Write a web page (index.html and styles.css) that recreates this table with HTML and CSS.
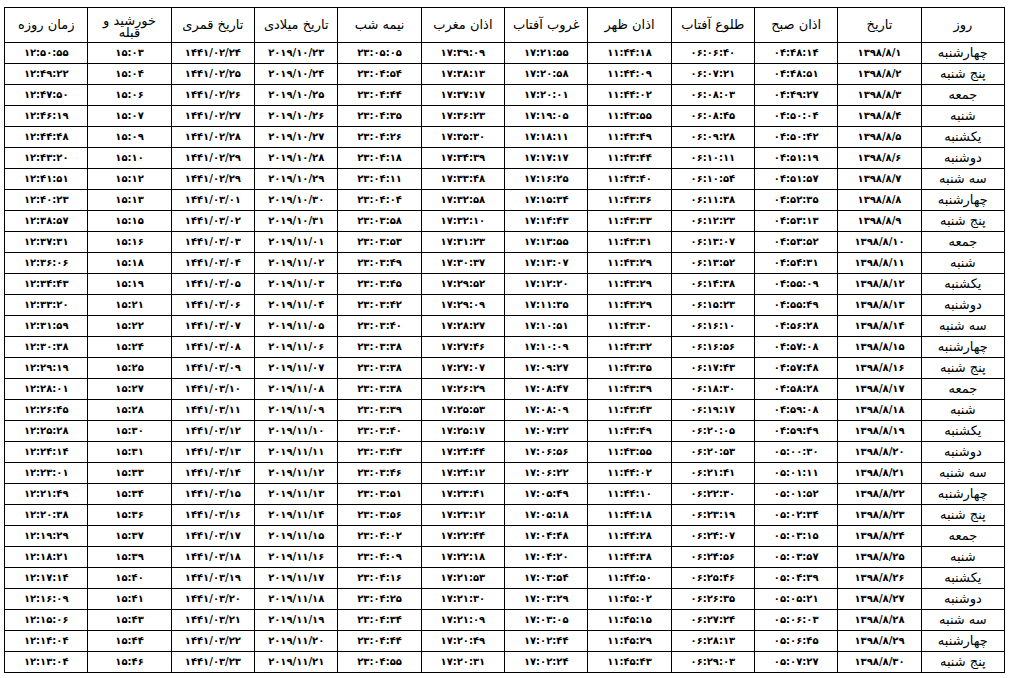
FILE: index.html
```html
<!DOCTYPE html>
<html dir="rtl" lang="fa">
<head>
<meta charset="utf-8">
<title>اوقات شرعی</title>
<link rel="stylesheet" href="styles.css">
</head>
<body>
<table class="times">
<thead>
<tr><th>روز</th><th>تاریخ</th><th>اذان صبح</th><th>طلوع آفتاب</th><th>اذان ظهر</th><th>غروب آفتاب</th><th>اذان مغرب</th><th>نیمه شب</th><th>تاریخ میلادی</th><th>تاریخ قمری</th><th class="two">خورشید و قبله</th><th>زمان روزه</th></tr>
</thead>
<tbody>
<tr><td class="day">چهارشنبه</td><td>۱۳۹۸/۸/۱</td><td>۰۴:۴۸:۱۴</td><td>۰۶:۰۶:۴۰</td><td>۱۱:۴۴:۱۸</td><td>۱۷:۲۱:۵۵</td><td>۱۷:۳۹:۰۹</td><td>۲۳:۰۵:۰۵</td><td>۲۰۱۹/۱۰/۲۳</td><td>۱۴۴۱/۰۲/۲۴</td><td>۱۵:۰۳</td><td>۱۲:۵۰:۵۵</td></tr>
<tr><td class="day">پنج شنبه</td><td>۱۳۹۸/۸/۲</td><td>۰۴:۴۸:۵۱</td><td>۰۶:۰۷:۲۱</td><td>۱۱:۴۴:۰۹</td><td>۱۷:۲۰:۵۸</td><td>۱۷:۳۸:۱۳</td><td>۲۳:۰۴:۵۴</td><td>۲۰۱۹/۱۰/۲۴</td><td>۱۴۴۱/۰۲/۲۵</td><td>۱۵:۰۴</td><td>۱۲:۴۹:۲۲</td></tr>
<tr><td class="day">جمعه</td><td>۱۳۹۸/۸/۳</td><td>۰۴:۴۹:۲۷</td><td>۰۶:۰۸:۰۳</td><td>۱۱:۴۴:۰۲</td><td>۱۷:۲۰:۰۱</td><td>۱۷:۳۷:۱۷</td><td>۲۳:۰۴:۴۴</td><td>۲۰۱۹/۱۰/۲۵</td><td>۱۴۴۱/۰۲/۲۶</td><td>۱۵:۰۶</td><td>۱۲:۴۷:۵۰</td></tr>
<tr><td class="day">شنبه</td><td>۱۳۹۸/۸/۴</td><td>۰۴:۵۰:۰۴</td><td>۰۶:۰۸:۴۵</td><td>۱۱:۴۳:۵۵</td><td>۱۷:۱۹:۰۵</td><td>۱۷:۳۶:۲۳</td><td>۲۳:۰۴:۳۵</td><td>۲۰۱۹/۱۰/۲۶</td><td>۱۴۴۱/۰۲/۲۷</td><td>۱۵:۰۷</td><td>۱۲:۴۶:۱۹</td></tr>
<tr><td class="day">یکشنبه</td><td>۱۳۹۸/۸/۵</td><td>۰۴:۵۰:۴۲</td><td>۰۶:۰۹:۲۸</td><td>۱۱:۴۳:۴۹</td><td>۱۷:۱۸:۱۱</td><td>۱۷:۳۵:۳۰</td><td>۲۳:۰۴:۲۶</td><td>۲۰۱۹/۱۰/۲۷</td><td>۱۴۴۱/۰۲/۲۸</td><td>۱۵:۰۹</td><td>۱۲:۴۴:۴۸</td></tr>
<tr><td class="day">دوشنبه</td><td>۱۳۹۸/۸/۶</td><td>۰۴:۵۱:۱۹</td><td>۰۶:۱۰:۱۱</td><td>۱۱:۴۳:۴۴</td><td>۱۷:۱۷:۱۷</td><td>۱۷:۳۴:۳۹</td><td>۲۳:۰۴:۱۸</td><td>۲۰۱۹/۱۰/۲۸</td><td>۱۴۴۱/۰۲/۲۹</td><td>۱۵:۱۰</td><td>۱۲:۴۳:۲۰</td></tr>
<tr><td class="day">سه شنبه</td><td>۱۳۹۸/۸/۷</td><td>۰۴:۵۱:۵۷</td><td>۰۶:۱۰:۵۴</td><td>۱۱:۴۳:۴۰</td><td>۱۷:۱۶:۲۵</td><td>۱۷:۳۳:۴۸</td><td>۲۳:۰۴:۱۱</td><td>۲۰۱۹/۱۰/۲۹</td><td>۱۴۴۱/۰۲/۲۹</td><td>۱۵:۱۲</td><td>۱۲:۴۱:۵۱</td></tr>
<tr><td class="day">چهارشنبه</td><td>۱۳۹۸/۸/۸</td><td>۰۴:۵۲:۳۵</td><td>۰۶:۱۱:۳۸</td><td>۱۱:۴۳:۳۶</td><td>۱۷:۱۵:۳۴</td><td>۱۷:۳۲:۵۸</td><td>۲۳:۰۴:۰۴</td><td>۲۰۱۹/۱۰/۳۰</td><td>۱۴۴۱/۰۳/۰۱</td><td>۱۵:۱۳</td><td>۱۲:۴۰:۲۳</td></tr>
<tr><td class="day">پنج شنبه</td><td>۱۳۹۸/۸/۹</td><td>۰۴:۵۳:۱۳</td><td>۰۶:۱۲:۲۳</td><td>۱۱:۴۳:۳۳</td><td>۱۷:۱۴:۴۳</td><td>۱۷:۳۲:۱۰</td><td>۲۳:۰۳:۵۸</td><td>۲۰۱۹/۱۰/۳۱</td><td>۱۴۴۱/۰۳/۰۲</td><td>۱۵:۱۵</td><td>۱۲:۳۸:۵۷</td></tr>
<tr><td class="day">جمعه</td><td>۱۳۹۸/۸/۱۰</td><td>۰۴:۵۳:۵۲</td><td>۰۶:۱۳:۰۷</td><td>۱۱:۴۳:۳۱</td><td>۱۷:۱۳:۵۵</td><td>۱۷:۳۱:۲۳</td><td>۲۳:۰۳:۵۳</td><td>۲۰۱۹/۱۱/۰۱</td><td>۱۴۴۱/۰۳/۰۳</td><td>۱۵:۱۶</td><td>۱۲:۳۷:۳۱</td></tr>
<tr><td class="day">شنبه</td><td>۱۳۹۸/۸/۱۱</td><td>۰۴:۵۴:۳۱</td><td>۰۶:۱۳:۵۲</td><td>۱۱:۴۳:۲۹</td><td>۱۷:۱۳:۰۷</td><td>۱۷:۳۰:۳۷</td><td>۲۳:۰۳:۴۹</td><td>۲۰۱۹/۱۱/۰۲</td><td>۱۴۴۱/۰۳/۰۴</td><td>۱۵:۱۸</td><td>۱۲:۳۶:۰۶</td></tr>
<tr><td class="day">یکشنبه</td><td>۱۳۹۸/۸/۱۲</td><td>۰۴:۵۵:۰۹</td><td>۰۶:۱۴:۳۸</td><td>۱۱:۴۳:۲۹</td><td>۱۷:۱۲:۲۰</td><td>۱۷:۲۹:۵۲</td><td>۲۳:۰۳:۴۵</td><td>۲۰۱۹/۱۱/۰۳</td><td>۱۴۴۱/۰۳/۰۵</td><td>۱۵:۱۹</td><td>۱۲:۳۴:۴۳</td></tr>
<tr><td class="day">دوشنبه</td><td>۱۳۹۸/۸/۱۳</td><td>۰۴:۵۵:۴۹</td><td>۰۶:۱۵:۲۳</td><td>۱۱:۴۳:۲۹</td><td>۱۷:۱۱:۳۵</td><td>۱۷:۲۹:۰۹</td><td>۲۳:۰۳:۴۲</td><td>۲۰۱۹/۱۱/۰۴</td><td>۱۴۴۱/۰۳/۰۶</td><td>۱۵:۲۱</td><td>۱۲:۳۳:۲۰</td></tr>
<tr><td class="day">سه شنبه</td><td>۱۳۹۸/۸/۱۴</td><td>۰۴:۵۶:۲۸</td><td>۰۶:۱۶:۱۰</td><td>۱۱:۴۳:۳۰</td><td>۱۷:۱۰:۵۱</td><td>۱۷:۲۸:۲۷</td><td>۲۳:۰۳:۴۰</td><td>۲۰۱۹/۱۱/۰۵</td><td>۱۴۴۱/۰۳/۰۷</td><td>۱۵:۲۲</td><td>۱۲:۳۱:۵۹</td></tr>
<tr><td class="day">چهارشنبه</td><td>۱۳۹۸/۸/۱۵</td><td>۰۴:۵۷:۰۸</td><td>۰۶:۱۶:۵۶</td><td>۱۱:۴۳:۳۲</td><td>۱۷:۱۰:۰۹</td><td>۱۷:۲۷:۴۶</td><td>۲۳:۰۳:۳۸</td><td>۲۰۱۹/۱۱/۰۶</td><td>۱۴۴۱/۰۳/۰۸</td><td>۱۵:۲۴</td><td>۱۲:۳۰:۳۸</td></tr>
<tr><td class="day">پنج شنبه</td><td>۱۳۹۸/۸/۱۶</td><td>۰۴:۵۷:۴۸</td><td>۰۶:۱۷:۴۳</td><td>۱۱:۴۳:۳۵</td><td>۱۷:۰۹:۲۷</td><td>۱۷:۲۷:۰۷</td><td>۲۳:۰۳:۳۸</td><td>۲۰۱۹/۱۱/۰۷</td><td>۱۴۴۱/۰۳/۰۹</td><td>۱۵:۲۵</td><td>۱۲:۲۹:۱۹</td></tr>
<tr><td class="day">جمعه</td><td>۱۳۹۸/۸/۱۷</td><td>۰۴:۵۸:۲۸</td><td>۰۶:۱۸:۳۰</td><td>۱۱:۴۳:۳۹</td><td>۱۷:۰۸:۴۷</td><td>۱۷:۲۶:۲۹</td><td>۲۳:۰۳:۳۸</td><td>۲۰۱۹/۱۱/۰۸</td><td>۱۴۴۱/۰۳/۱۰</td><td>۱۵:۲۷</td><td>۱۲:۲۸:۰۱</td></tr>
<tr><td class="day">شنبه</td><td>۱۳۹۸/۸/۱۸</td><td>۰۴:۵۹:۰۸</td><td>۰۶:۱۹:۱۷</td><td>۱۱:۴۳:۴۳</td><td>۱۷:۰۸:۰۹</td><td>۱۷:۲۵:۵۳</td><td>۲۳:۰۳:۳۹</td><td>۲۰۱۹/۱۱/۰۹</td><td>۱۴۴۱/۰۳/۱۱</td><td>۱۵:۲۸</td><td>۱۲:۲۶:۴۵</td></tr>
<tr><td class="day">یکشنبه</td><td>۱۳۹۸/۸/۱۹</td><td>۰۴:۵۹:۴۹</td><td>۰۶:۲۰:۰۵</td><td>۱۱:۴۳:۴۹</td><td>۱۷:۰۷:۳۲</td><td>۱۷:۲۵:۱۷</td><td>۲۳:۰۳:۴۰</td><td>۲۰۱۹/۱۱/۱۰</td><td>۱۴۴۱/۰۳/۱۲</td><td>۱۵:۳۰</td><td>۱۲:۲۵:۲۸</td></tr>
<tr><td class="day">دوشنبه</td><td>۱۳۹۸/۸/۲۰</td><td>۰۵:۰۰:۳۰</td><td>۰۶:۲۰:۵۳</td><td>۱۱:۴۳:۵۵</td><td>۱۷:۰۶:۵۶</td><td>۱۷:۲۴:۴۴</td><td>۲۳:۰۳:۴۳</td><td>۲۰۱۹/۱۱/۱۱</td><td>۱۴۴۱/۰۳/۱۳</td><td>۱۵:۳۱</td><td>۱۲:۲۴:۱۴</td></tr>
<tr><td class="day">سه شنبه</td><td>۱۳۹۸/۸/۲۱</td><td>۰۵:۰۱:۱۱</td><td>۰۶:۲۱:۴۱</td><td>۱۱:۴۴:۰۲</td><td>۱۷:۰۶:۲۲</td><td>۱۷:۲۴:۱۲</td><td>۲۳:۰۳:۴۶</td><td>۲۰۱۹/۱۱/۱۲</td><td>۱۴۴۱/۰۳/۱۴</td><td>۱۵:۳۳</td><td>۱۲:۲۳:۰۱</td></tr>
<tr><td class="day">چهارشنبه</td><td>۱۳۹۸/۸/۲۲</td><td>۰۵:۰۱:۵۲</td><td>۰۶:۲۲:۳۰</td><td>۱۱:۴۴:۱۰</td><td>۱۷:۰۵:۴۹</td><td>۱۷:۲۳:۴۱</td><td>۲۳:۰۳:۵۱</td><td>۲۰۱۹/۱۱/۱۳</td><td>۱۴۴۱/۰۳/۱۵</td><td>۱۵:۳۴</td><td>۱۲:۲۱:۴۹</td></tr>
<tr><td class="day">پنج شنبه</td><td>۱۳۹۸/۸/۲۳</td><td>۰۵:۰۲:۳۴</td><td>۰۶:۲۳:۱۹</td><td>۱۱:۴۴:۱۸</td><td>۱۷:۰۵:۱۸</td><td>۱۷:۲۳:۱۲</td><td>۲۳:۰۳:۵۶</td><td>۲۰۱۹/۱۱/۱۴</td><td>۱۴۴۱/۰۳/۱۶</td><td>۱۵:۳۶</td><td>۱۲:۲۰:۳۸</td></tr>
<tr><td class="day">جمعه</td><td>۱۳۹۸/۸/۲۴</td><td>۰۵:۰۳:۱۵</td><td>۰۶:۲۴:۰۷</td><td>۱۱:۴۴:۲۸</td><td>۱۷:۰۴:۴۸</td><td>۱۷:۲۲:۴۴</td><td>۲۳:۰۴:۰۲</td><td>۲۰۱۹/۱۱/۱۵</td><td>۱۴۴۱/۰۳/۱۷</td><td>۱۵:۳۷</td><td>۱۲:۱۹:۲۹</td></tr>
<tr><td class="day">شنبه</td><td>۱۳۹۸/۸/۲۵</td><td>۰۵:۰۳:۵۷</td><td>۰۶:۲۴:۵۶</td><td>۱۱:۴۴:۳۸</td><td>۱۷:۰۴:۲۰</td><td>۱۷:۲۲:۱۸</td><td>۲۳:۰۴:۰۹</td><td>۲۰۱۹/۱۱/۱۶</td><td>۱۴۴۱/۰۳/۱۸</td><td>۱۵:۳۹</td><td>۱۲:۱۸:۲۱</td></tr>
<tr><td class="day">یکشنبه</td><td>۱۳۹۸/۸/۲۶</td><td>۰۵:۰۴:۳۹</td><td>۰۶:۲۵:۴۶</td><td>۱۱:۴۴:۵۰</td><td>۱۷:۰۳:۵۴</td><td>۱۷:۲۱:۵۳</td><td>۲۳:۰۴:۱۶</td><td>۲۰۱۹/۱۱/۱۷</td><td>۱۴۴۱/۰۳/۱۹</td><td>۱۵:۴۰</td><td>۱۲:۱۷:۱۴</td></tr>
<tr><td class="day">دوشنبه</td><td>۱۳۹۸/۸/۲۷</td><td>۰۵:۰۵:۲۱</td><td>۰۶:۲۶:۳۵</td><td>۱۱:۴۵:۰۲</td><td>۱۷:۰۳:۲۹</td><td>۱۷:۲۱:۳۰</td><td>۲۳:۰۴:۲۵</td><td>۲۰۱۹/۱۱/۱۸</td><td>۱۴۴۱/۰۳/۲۰</td><td>۱۵:۴۱</td><td>۱۲:۱۶:۰۹</td></tr>
<tr><td class="day">سه شنبه</td><td>۱۳۹۸/۸/۲۸</td><td>۰۵:۰۶:۰۳</td><td>۰۶:۲۷:۲۴</td><td>۱۱:۴۵:۱۵</td><td>۱۷:۰۳:۰۵</td><td>۱۷:۲۱:۰۹</td><td>۲۳:۰۴:۳۴</td><td>۲۰۱۹/۱۱/۱۹</td><td>۱۴۴۱/۰۳/۲۱</td><td>۱۵:۴۳</td><td>۱۲:۱۵:۰۶</td></tr>
<tr><td class="day">چهارشنبه</td><td>۱۳۹۸/۸/۲۹</td><td>۰۵:۰۶:۴۵</td><td>۰۶:۲۸:۱۳</td><td>۱۱:۴۵:۲۹</td><td>۱۷:۰۲:۴۴</td><td>۱۷:۲۰:۴۹</td><td>۲۳:۰۴:۴۴</td><td>۲۰۱۹/۱۱/۲۰</td><td>۱۴۴۱/۰۳/۲۲</td><td>۱۵:۴۴</td><td>۱۲:۱۴:۰۴</td></tr>
<tr><td class="day">پنج شنبه</td><td>۱۳۹۸/۸/۳۰</td><td>۰۵:۰۷:۲۷</td><td>۰۶:۲۹:۰۳</td><td>۱۱:۴۵:۴۳</td><td>۱۷:۰۲:۲۴</td><td>۱۷:۲۰:۳۱</td><td>۲۳:۰۴:۵۵</td><td>۲۰۱۹/۱۱/۲۱</td><td>۱۴۴۱/۰۳/۲۳</td><td>۱۵:۴۶</td><td>۱۲:۱۳:۰۴</td></tr>
</tbody>
</table>
</body>
</html>
```
FILE: styles.css
```css
html, body {
  margin: 0;
  background: #ffffff;
}
body {
  padding: 7px 4px 0 4px;
  font-family: "DejaVu Sans", "Noto Sans", sans-serif;
  color: #000000;
}
.times {
  border-collapse: collapse;
  table-layout: fixed;
  width: 1001px;
}
.times th,
.times td {
  border: 1px solid #000000;
  padding: 0;
  text-align: center;
  vertical-align: middle;
  overflow: hidden;
  white-space: nowrap;
}
.times th {
  height: 34px;
  font-weight: normal;
  font-size: 13px;
  line-height: 12px;
}
.times th.two {
  height: 30px;
  white-space: normal;
  padding: 4px 6px 0;
  line-height: 12px;
}
.times td {
  height: 20px;
  font-size: 10px;
  font-weight: bold;
  line-height: 12px;
}
.times td.day {
  font-weight: normal;
  font-size: 13px;
}
```
